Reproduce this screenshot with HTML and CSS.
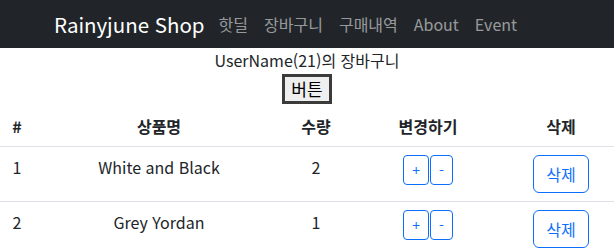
FILE: index.html
```html
<!DOCTYPE html>
<html lang="ko">
<head>
<meta charset="utf-8">
<title>Rainyjune Shop</title>
<link rel="stylesheet" href="styles.css">
</head>
<body>
<nav class="navbar">
  <div class="navbar-inner">
    <a class="brand" href="#">Rainyjune Shop</a>
    <div class="nav-links">
      <a class="nav-link" href="#">핫딜</a>
      <a class="nav-link" href="#">장바구니</a>
      <a class="nav-link" href="#">구매내역</a>
      <a class="nav-link" href="#">About</a>
      <a class="nav-link" href="#">Event</a>
    </div>
  </div>
</nav>
<div class="title">UserName(21)의 장바구니</div>
<div class="btn-row"><button class="plain-btn">버튼</button></div>
<table class="cart">
  <thead>
    <tr>
      <th class="c1">#</th>
      <th class="c2">상품명</th>
      <th class="c3">수량</th>
      <th class="c4">변경하기</th>
      <th class="c5">삭제</th>
    </tr>
  </thead>
  <tbody>
    <tr>
      <td>1</td>
      <td>White and Black</td>
      <td>2</td>
      <td><div class="pm"><button class="btn-o btn-sm">+</button><button class="btn-o btn-sm">-</button></div></td>
      <td><button class="btn-o btn-md">삭제</button></td>
    </tr>
    <tr>
      <td>2</td>
      <td>Grey Yordan</td>
      <td>1</td>
      <td><div class="pm"><button class="btn-o btn-sm">+</button><button class="btn-o btn-sm">-</button></div></td>
      <td><button class="btn-o btn-md">삭제</button></td>
    </tr>
  </tbody>
</table>
</body>
</html>
```
FILE: styles.css
```css
* { box-sizing: border-box; }
html, body { margin: 0; padding: 0; }
body {
  font-family: "Noto Sans CJK KR", "Noto Sans", sans-serif;
  font-size: 16px;
  line-height: 24px;
  color: #212529;
  background: #fff;
}
.navbar {
  background: #212529;
  height: 48px;
  display: flex;
  align-items: center;
}
.navbar-inner {
  display: flex;
  align-items: center;
  padding-left: 54px;
}
.brand {
  color: #fff;
  font-size: 20.5px;
  line-height: 30px;
  text-decoration: none;
  margin-right: 6px;
}
.nav-links { display: flex; }
.nav-link {
  color: rgba(255, 255, 255, 0.55);
  text-decoration: none;
  padding: 0 8px;
  line-height: 24px;
}
.title {
  text-align: center;
  height: 24px;
}
.btn-row {
  display: flex;
  justify-content: center;
  height: 34px;
  padding-top: 2px;
}
.plain-btn {
  font-family: inherit;
  font-size: 17px;
  line-height: 24px;
  height: 30px;
  padding: 0 6px;
  background: #efefef;
  border: 3px solid #3b3b3b;
  color: #000;
  border-radius: 0;
}
.cart {
  width: 100%;
  border-collapse: collapse;
  table-layout: fixed;
}
.cart th, .cart td {
  padding: 8px;
  text-align: center;
  vertical-align: top;
  border-bottom: 1px solid #dee2e6;
}
.cart th { font-weight: 700; }
.cart th:first-child, .cart td:first-child { padding-left: 0; padding-right: 0; }
.c1 { width: 34px; }
.c2 { width: 250px; }
.c3 { width: 64px; }
.c4 { width: 160px; }
.c5 { width: 106px; }
.pm {
  display: inline-flex;
  gap: 1px;
}
.btn-o {
  font-family: inherit;
  background: #fff;
  color: #0d6efd;
  border: 1px solid #0d6efd;
  cursor: pointer;
}
.btn-sm {
  font-size: 14px;
  line-height: 21px;
  height: 30px;
  padding: 3px 8px;
  border-radius: 4px;
}
.btn-md {
  font-size: 16px;
  line-height: 24px;
  height: 38px;
  padding: 6px 12px;
  border-radius: 6px;
}
```
